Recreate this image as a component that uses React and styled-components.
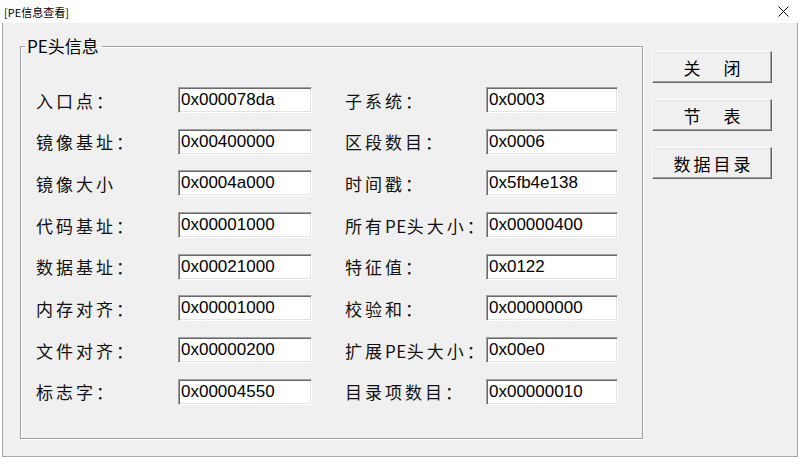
import React from 'react';
import styled, {createGlobalStyle} from "styled-components";

const GlobalStyle = createGlobalStyle`
html, body {
    margin: 0;
    padding: 0;
    background: #ffffff;
}
`

const cjk = `"Noto Sans CJK SC", "Noto Sans", sans-serif`;

const Window = styled.div`
width: 800px;
height: 459px;
display: flex;
flex-direction: column;
background: #ffffff;
overflow: hidden;
`

const TitleBar = styled.div`
height: 23px;
flex: none;
display: flex;
align-items: center;
justify-content: space-between;
padding: 0 11px 0 4px;
font-family: ${cjk};
font-size: 11px;
color: #000;
`

const CloseIcon = styled.svg`
display: block;
`

const Body = styled.div`
flex: 1;
margin: 0 2px 2px 2px;
border: 1px solid #a8a8a8;
border-top: none;
background: #f0f0f0;
display: flex;
align-items: flex-start;
padding-left: 17px;
`

const Group = styled.fieldset`
box-sizing: border-box;
width: 623px;
height: 403px;
margin: 13px 0 0 0;
padding: 31px 0 0 15px;
border: 1px solid #a0a0a0;
box-shadow: inset 1px 1px 0 #ffffff, 1px 1px 0 #ffffff;
min-width: 0;
`

const Legend = styled.legend`
margin-left: -11px;
padding: 0 3px 0 2px;
font-family: ${cjk};
font-size: 17px;
line-height: 20px;
color: #000;
`

const Fields = styled.div`
display: grid;
grid-template-columns: 142px 167px 141px 132px;
grid-auto-rows: 26px;
row-gap: 15.7px;
align-items: center;
`

const Label = styled.span`
font-family: ${cjk};
font-size: 17px;
letter-spacing: 3px;
color: #111;
white-space: nowrap;
`

const Latin = styled.span`
letter-spacing: 0.5px;
`

const ValueBox = styled.div`
box-sizing: border-box;
width: ${p => p.$w}px;
height: 26px;
display: flex;
align-items: center;
padding-left: 2px;
background: #ffffff;
border-top: 1px solid #a0a0a0;
border-left: 1px solid #a0a0a0;
border-right: 1px solid #ffffff;
border-bottom: 1px solid #ffffff;
box-shadow: inset 1px 1px 0 #696969, inset -1px -1px 0 #e3e3e3;
font-family: "Liberation Sans", Arial, sans-serif;
font-size: 17px;
color: #000;
`

const Buttons = styled.div`
display: flex;
flex-direction: column;
gap: 16px;
margin: 28px 0 0 9px;
`

const Button = styled.button`
box-sizing: border-box;
width: 120px;
height: 32px;
padding: 0 0 0 3px;
background: #f0f0f0;
border-top: 1px solid #ffffff;
border-left: 1px solid #ffffff;
border-right: 1px solid #696969;
border-bottom: 1px solid #696969;
box-shadow: inset -1px -1px 0 #a0a0a0, inset 1px 1px 0 #e3e3e3;
font-family: ${cjk};
font-size: 17px;
letter-spacing: 3px;
color: #000;
cursor: pointer;
`

const fields = [
    ['入口点：', '0x000078da', '子系统：', '0x0003'],
    ['镜像基址：', '0x00400000', '区段数目：', '0x0006'],
    ['镜像大小', '0x0004a000', '时间戳：', '0x5fb4e138'],
    ['代码基址：', '0x00001000', '所有PE头大小：', '0x00000400'],
    ['数据基址：', '0x00021000', '特征值：', '0x0122'],
    ['内存对齐：', '0x00001000', '校验和：', '0x00000000'],
    ['文件对齐：', '0x00000200', '扩展PE头大小：', '0x00e0'],
    ['标志字：', '0x00004550', '目录项数目：', '0x00000010'],
];

// Latin runs like "PE" sit tighter than the CJK characters around them
const FieldLabel = ({text}) => (
    <Label>
        {text.split(/([A-Za-z]+)/).map((part, i) =>
            /[A-Za-z]/.test(part) ? <Latin key={i}>{part}</Latin> : part
        )}
    </Label>
)

const App = () => {
    return (
        <Window>
            <GlobalStyle/>
            <TitleBar>
                <span>[PE信息查看]</span>
                <CloseIcon width="11" height="11" viewBox="0 0 11 11">
                    <path d="M0.5 0.5L10.5 10.5M10.5 0.5L0.5 10.5" stroke="#000" strokeWidth="1" fill="none"/>
                </CloseIcon>
            </TitleBar>
            <Body>
                <Group>
                    <Legend>PE头信息</Legend>
                    <Fields>
                        {fields.map(([l1, v1, l2, v2]) => (
                            <React.Fragment key={l1}>
                                <FieldLabel text={l1}/>
                                <ValueBox $w={134}>{v1}</ValueBox>
                                <FieldLabel text={l2}/>
                                <ValueBox $w={132}>{v2}</ValueBox>
                            </React.Fragment>
                        ))}
                    </Fields>
                </Group>
                <Buttons>
                    <Button>关　闭</Button>
                    <Button>节　表</Button>
                    <Button>数据目录</Button>
                </Buttons>
            </Body>
        </Window>
    )
};

export default App;
